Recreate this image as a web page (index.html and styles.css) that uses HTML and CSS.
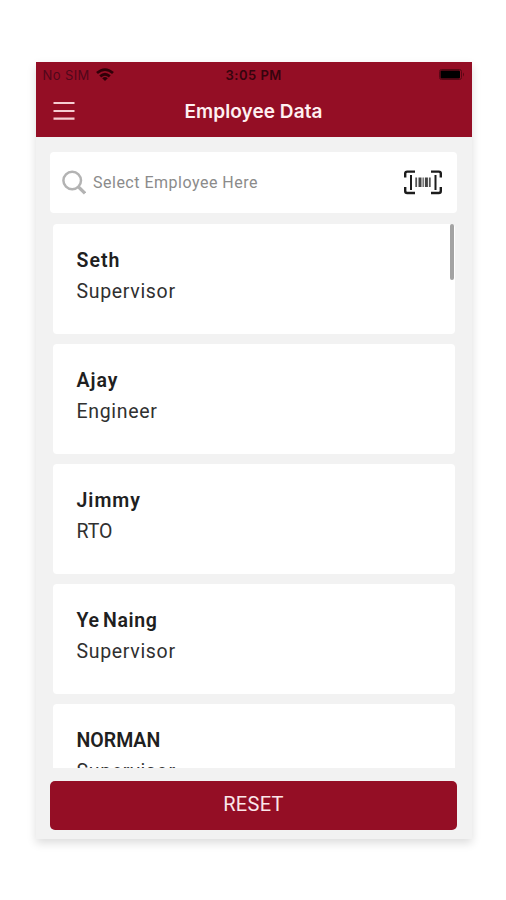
FILE: index.html
```html
<!DOCTYPE html>
<html lang="en">
<head>
<meta charset="utf-8">
<title>Employee Data</title>
<link rel="stylesheet" href="styles.css">
</head>
<body>
<main class="phone">
  <header class="header">
    <div class="status">
      <span class="carrier">No SIM</span>
      <svg class="wifi" width="18" height="13" viewBox="0 0 18 13" fill="none" stroke="currentColor" stroke-width="2.8"><path d="M1 5Q9-1.8 17 5M4.2 8.4Q9 4.2 13.8 8.4"/><path d="M6.2 10.2Q9 8 11.8 10.2L9 13Z" fill="currentColor" stroke="none"/></svg>
      <span class="clock">3:05 PM</span>
      <svg class="battery" width="26" height="11" viewBox="0 0 26 11"><rect x=".5" y=".5" width="22" height="10" rx="2" fill="none" stroke="#580714"/><rect x="1.5" y="1.5" width="19.5" height="8" rx="1"/><path d="M24 3.5q2 2 0 4z" fill="#580714"/></svg>
    </div>
    <div class="titlebar">
      <svg class="menu" width="22" height="20" viewBox="0 0 22 20" stroke="#f6cdd2" stroke-width="2.2"><path d="M.5 2H21.5M.5 10H21.5M.5 17.6H21.5"/></svg>
      <h1 class="title">Employee Data</h1>
    </div>
  </header>
  <div class="search">
    <svg width="24" height="25" viewBox="0 0 24 25" fill="none" stroke="#b3b3b3"><circle cx="10.2" cy="10.5" r="8.8" stroke-width="2.5"/><path d="M16.5 17L23 23.3" stroke-width="3.2"/></svg>
    <span class="placeholder">Select Employee Here</span>
    <svg class="scan" width="38" height="25" viewBox="0 0 38 25" fill="none" stroke="#1c1c1c" stroke-width="2.4"><path d="M1.2 7.5V3.6Q1.2 1.6 3.2 1.6H11M27 1.6H34.8Q36.8 1.6 36.8 3.6V7.5M1.2 17V21Q1.2 23 3.2 23H11M27 23H34.8Q36.8 23 36.8 21V17"/><path d="M7 5V20M31.5 5V20" stroke-width="2"/><path d="M12.2 7.5V17M25.8 7.5V17" stroke-width="1.8" stroke="#555"/><path d="M16 7.5V17M22.4 7.5V17" stroke-width="3" stroke="#444"/><path d="M19.2 7.5V17" stroke-width="1.6" stroke="#777"/></svg>
  </div>
  <section class="list">
    <article class="card"><h2 class="name seth">Seth</h2><p class="role">Supervisor</p></article>
    <article class="card"><h2 class="name seth">Ajay</h2><p class="role">Engineer</p></article>
    <article class="card"><h2 class="name seth">Jimmy</h2><p class="role rto">RTO</p></article>
    <article class="card"><h2 class="name naing">Ye Naing</h2><p class="role">Supervisor</p></article>
    <article class="card"><h2 class="name norman">NORMAN</h2><p class="role">Supervisor</p></article>
    <i class="thumb"></i>
  </section>
  <button class="reset">RESET</button>
</main>
</body>
</html>
```
FILE: styles.css
```css
* { box-sizing: border-box; }
body { display: flow-root; margin: 0; height: 900px; overflow: hidden; background: #fff; font-family: Roboto, "Liberation Sans", sans-serif; }
h1, h2, p { margin: 0; }
.phone { width: 436px; height: 777px; margin: 62px 0 0 35.5px; background: #f2f2f2; box-shadow: 0 4px 9px rgba(0,0,0,.14); display: flex; flex-direction: column; align-items: center; }
.header { width: 100%; height: 74.5px; flex: none; background: #940e25; }
.status { height: 24px; display: grid; grid-template-columns: 53px 130px 1fr auto; align-items: center; padding: 0 7px; color: #36040d; font: 13px/24px Inter, sans-serif; }
.carrier { letter-spacing: .4px; color: #50071a; }
.wifi { color: #300008; }
.clock { padding-top: 1px; font-weight: 600; font-size: 13px; letter-spacing: .5px; }
.titlebar { height: 50px; display: flex; align-items: center; padding-left: 17.5px; }
.title { width: 140px; margin-left: 109.5px; padding-top: 2px; color: #fff0f1; font: 600 19px/50px Inter, sans-serif; letter-spacing: .07px; white-space: nowrap; }
.search { width: 407px; height: 61px; flex: none; margin-top: 15.5px; padding: 0 15px 0 12px; display: flex; align-items: center; background: #fff; border-radius: 4px; }
.placeholder { margin-left: 7px; color: #8b8b8b; font-size: 16px; letter-spacing: .5px; }
.scan { margin-left: auto; }
.list { position: relative; width: 402px; height: 544px; flex: none; margin-top: 11px; overflow: hidden; display: flex; flex-direction: column; gap: 10px; }
.card { height: 110px; flex: none; padding: 21px 24px; background: #fff; border-radius: 4px; }
.name { height: 31px; color: #202020; font-size: 19.5px; line-height: 31px; font-weight: 600; letter-spacing: .7px; }
.seth { letter-spacing: 1px; }
.naing { letter-spacing: .6px; word-spacing: -2px; }
.norman { letter-spacing: 0; }
.role { color: #303030; font-size: 19.5px; line-height: 31px; letter-spacing: .68px; }
.rto { letter-spacing: 0; }
.thumb { position: absolute; right: 1px; top: 0; width: 3.5px; height: 56px; background: #a3a3a3; border-radius: 2px; }
.reset { width: 407px; height: 49px; flex: none; margin-top: 12.5px; padding: 0 0 3px; border: 0; border-radius: 5px; background: #940e25; color: #fbe6e9; font: 20px/46px Roboto, sans-serif; letter-spacing: .3px; }
```
